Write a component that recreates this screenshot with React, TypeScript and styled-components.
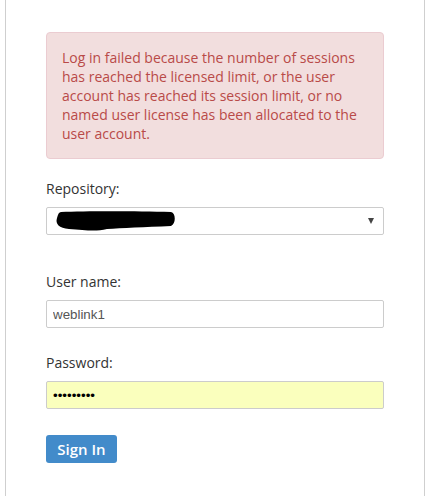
import styled, { createGlobalStyle } from "styled-components";

const GlobalStyle = createGlobalStyle`
  html, body {
    margin: 0;
    padding: 0;
    background: #fff;
  }
  body {
    font-family: "Open Sans", "Liberation Sans", sans-serif;
    font-size: 14px;
    color: #333;
  }
`;

const Panel = styled.div`
  margin-left: 5px;
  width: 420px;
  min-height: 496px;
  box-sizing: border-box;
  border-left: 1px solid #cfcfcf;
  border-right: 1px solid #cfcfcf;
  padding: 32px 40px 0 40px;
`;

const Alert = styled.div`
  background: #f2dede;
  border: 1px solid #ebccd1;
  border-radius: 4px;
  color: #b94a48;
  line-height: 19px;
  padding: 15px;
`;

const Field = styled.div<{ $gap: number }>`
  margin-top: ${(p) => p.$gap}px;
`;

const Label = styled.label`
  display: block;
  line-height: 20px;
  margin-bottom: 8px;
`;

const Box = styled.div<{ $fill?: string }>`
  box-sizing: border-box;
  height: 28px;
  border: 1px solid #ccc;
  border-radius: 2px;
  background: ${(p) => p.$fill ?? "#fff"};
  display: flex;
  align-items: center;
  padding: 0 6px;
`;

const TextInput = styled.input<{ $ink?: string }>`
  all: unset;
  flex: 1;
  font-family: "Liberation Sans", Arial, sans-serif;
  font-size: 13.33px;
  color: ${(p) => p.$ink ?? "#555"};
`;

const Caret = styled.span`
  margin-left: auto;
  margin-right: 3px;
  width: 0;
  height: 0;
  border-left: 3.5px solid transparent;
  border-right: 3.5px solid transparent;
  border-top: 6px solid #444;
`;

const SignInButton = styled.button`
  margin-top: 26px;
  width: 71px;
  height: 28px;
  border: none;
  border-radius: 3px;
  background: #428bca;
  color: #fff;
  font-family: "Open Sans", "Liberation Sans", sans-serif;
  font-weight: 600;
  font-size: 15px;
  padding: 0;
  cursor: pointer;
`;

function Redaction() {
  return (
    <svg width="122" height="22" viewBox="0 0 122 22" style={{ marginLeft: 2 }}>
      <path
        d="M6 2 C30 1 80 1 116 2 C121 3 121 14 116 16 C90 17 66 18 52 19 C40 22 30 20 14 19 C4 18 0 14 2 8 C3 4 4 2 6 2 Z"
        fill="#000"
      />
    </svg>
  );
}

export default function App() {
  return (
    <>
      <GlobalStyle />
      <Panel>
        <Alert>
          Log in failed because the number of sessions has reached the licensed
          limit, or the user account has reached its session limit, or no named
          user license has been allocated to the user account.
        </Alert>

        <Field $gap={20}>
          <Label>Repository:</Label>
          <Box>
            <Redaction />
            <Caret />
          </Box>
        </Field>

        <Field $gap={37}>
          <Label>User name:</Label>
          <Box>
            <TextInput defaultValue="weblink1" />
          </Box>
        </Field>

        <Field $gap={25}>
          <Label>Password:</Label>
          <Box $fill="#faffbd">
            <TextInput type="password" defaultValue="123456789" $ink="#000" />
          </Box>
        </Field>

        <SignInButton>Sign In</SignInButton>
      </Panel>
    </>
  );
}
